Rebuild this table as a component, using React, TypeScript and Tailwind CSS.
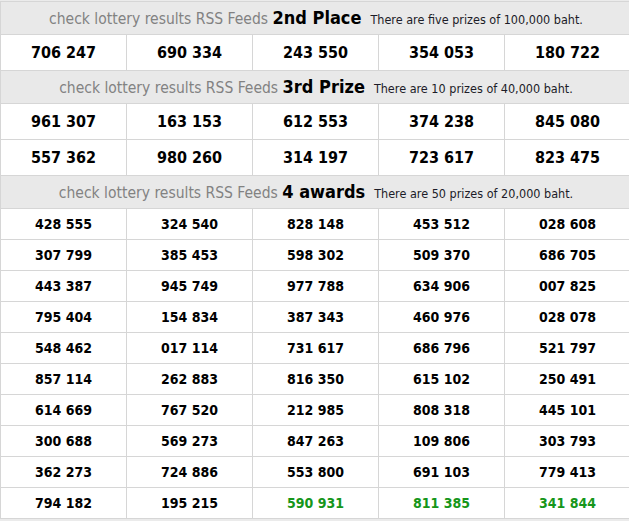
const second = ['706 247', '690 334', '243 550', '354 053', '180 722'];

const third = [
  ['961 307', '163 153', '612 553', '374 238', '845 080'],
  ['557 362', '980 260', '314 197', '723 617', '823 475'],
];

const fourth = [
  ['428 555', '324 540', '828 148', '453 512', '028 608'],
  ['307 799', '385 453', '598 302', '509 370', '686 705'],
  ['443 387', '945 749', '977 788', '634 906', '007 825'],
  ['795 404', '154 834', '387 343', '460 976', '028 078'],
  ['548 462', '017 114', '731 617', '686 796', '521 797'],
  ['857 114', '262 883', '816 350', '615 102', '250 491'],
  ['614 669', '767 520', '212 985', '808 318', '445 101'],
  ['300 688', '569 273', '847 263', '109 806', '303 793'],
  ['362 273', '724 886', '553 800', '691 103', '779 413'],
  ['794 182', '195 215', '590 931', '811 385', '341 844'],
];

// numbers drawn last this round are shown in green
const fresh = ['590 931', '811 385', '341 844'];

function Heading({ title, note }: { title: string; note: string }) {
  return (
    <div className="h-[33px] border-b border-[#d6d6d6] bg-[#e9e9e9] flex items-center justify-center whitespace-nowrap">
      <span className="text-[15.5px] text-[#828282]">
        check lottery results RSS Feeds{' '}
        <b className="text-[18px] text-black font-bold">{title}</b>
        <span className="ml-[9px] text-[12.5px] text-[#1c1c28]">{note}</span>
      </span>
    </div>
  );
}

function Row({ nums, big }: { nums: string[]; big?: boolean }) {
  return (
    <div className="grid grid-cols-5 border-b border-[#d6d6d6] bg-white">
      {nums.map((n, i) => (
        <div
          key={i}
          className={`border-r border-[#d6d6d6] flex items-center justify-center font-bold ${
            big ? 'h-[35px] text-[16px]' : 'h-[30px] text-[14px]'
          } ${fresh.includes(n) ? 'text-[#16961a]' : 'text-black'}`}
        >
          {n}
        </div>
      ))}
    </div>
  );
}

export default function App() {
  return (
    <div className="min-h-[521px] bg-[#ebebeb] pt-[1px] overflow-hidden font-['DejaVu_Sans_Condensed','DejaVu_Sans',sans-serif]">
      <div className="w-[631px] border-t border-l border-[#d6d6d6]">
        <Heading title="2nd Place" note="There are five prizes of 100,000 baht." />
        <Row nums={second} big />
        <Heading title="3rd Prize" note="There are 10 prizes of 40,000 baht." />
        {third.map((r, i) => (
          <Row key={i} nums={r} big />
        ))}
        <Heading title="4 awards" note="There are 50 prizes of 20,000 baht." />
        {fourth.map((r, i) => (
          <Row key={i} nums={r} />
        ))}
      </div>
    </div>
  );
}
